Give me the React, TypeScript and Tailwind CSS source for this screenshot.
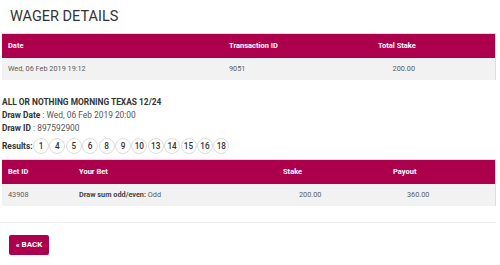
import React from "react";

const results = [1, 4, 5, 6, 8, 9, 10, 13, 14, 15, 16, 18];

export default function App() {
  return (
    <div className="w-[500px] h-[265px] overflow-hidden bg-white font-['Roboto',sans-serif] text-[#5a5a5a]">
      <h1 className="pl-[10px] pt-[8px] text-[14.5px] leading-[17px] text-[#333]">WAGER DETAILS</h1>

      <div className="mx-[2px] mt-[8px] w-[494px] border-t border-r border-[#ddd]">
        <div className="flex h-[24px] items-center bg-[#ac004c] text-[7.5px] font-bold text-white">
          <div className="w-[227px] pl-[6px]">Date</div>
          <div className="w-[149px]">Transaction ID</div>
          <div className="flex-1">Total Stake</div>
        </div>
        <div className="flex h-[22px] items-center bg-[#f2f2f2] text-[7.3px]">
          <div className="w-[227px] pl-[6px]">Wed, 06 Feb 2019 19:12</div>
          <div className="w-[149px]">9051</div>
          <div className="w-[37px] text-right">200.00</div>
        </div>
      </div>

      <div className="mt-[16px] pl-[2px] text-[8.4px] text-[#333]">
        <div className="font-bold leading-[12px]">ALL OR NOTHING MORNING TEXAS 12/24</div>
        <div className="mt-[1px] leading-[13px]">
          <span className="font-bold">Draw Date</span> <span className="text-[#555]">: Wed, 06 Feb 2019 20:00</span>
        </div>
        <div className="leading-[13px]">
          <span className="font-bold">Draw ID</span> <span className="text-[#555]">: 897592900</span>
        </div>
        <div className="mt-[3px] flex items-center">
          <span className="w-[30px] shrink-0 font-bold">Results:</span>
          <div className="ml-[1px] flex gap-[0.4px]">
            {results.map((n) => (
              <span
                key={n}
                className="flex h-[16px] w-[16px] items-center justify-center rounded-full border border-[#ddd] text-[8.2px] font-medium"
              >
                {n}
              </span>
            ))}
          </div>
        </div>
      </div>

      <div className="mx-[2px] mt-[5px] w-[494px] border-t border-r border-[#ddd]">
        <div className="flex h-[24px] items-center bg-[#ac004c] text-[7.5px] font-bold text-white">
          <div className="w-[77px] pl-[6px]">Bet ID</div>
          <div className="w-[204px]">Your Bet</div>
          <div className="w-[110px]">Stake</div>
          <div className="flex-1">Payout</div>
        </div>
        <div className="flex h-[22px] items-center bg-[#f2f2f2] text-[7.3px]">
          <div className="w-[77px] pl-[6px]">43908</div>
          <div className="w-[220px]">
            <span className="font-bold text-[#444]">Draw sum odd/even:</span> Odd
          </div>
          <div className="w-[108px]">200.00</div>
          <div className="flex-1">360.00</div>
        </div>
      </div>

      <div className="mt-[16px] w-[496px] border-t border-[#eee]" />

      <div className="pl-[9px] pt-[12px]">
        <button className="flex h-[20px] w-[40px] items-center justify-center rounded-[2px] bg-[#ac004c] text-[8px] font-bold text-white">
          « BACK
        </button>
      </div>
    </div>
  );
}
